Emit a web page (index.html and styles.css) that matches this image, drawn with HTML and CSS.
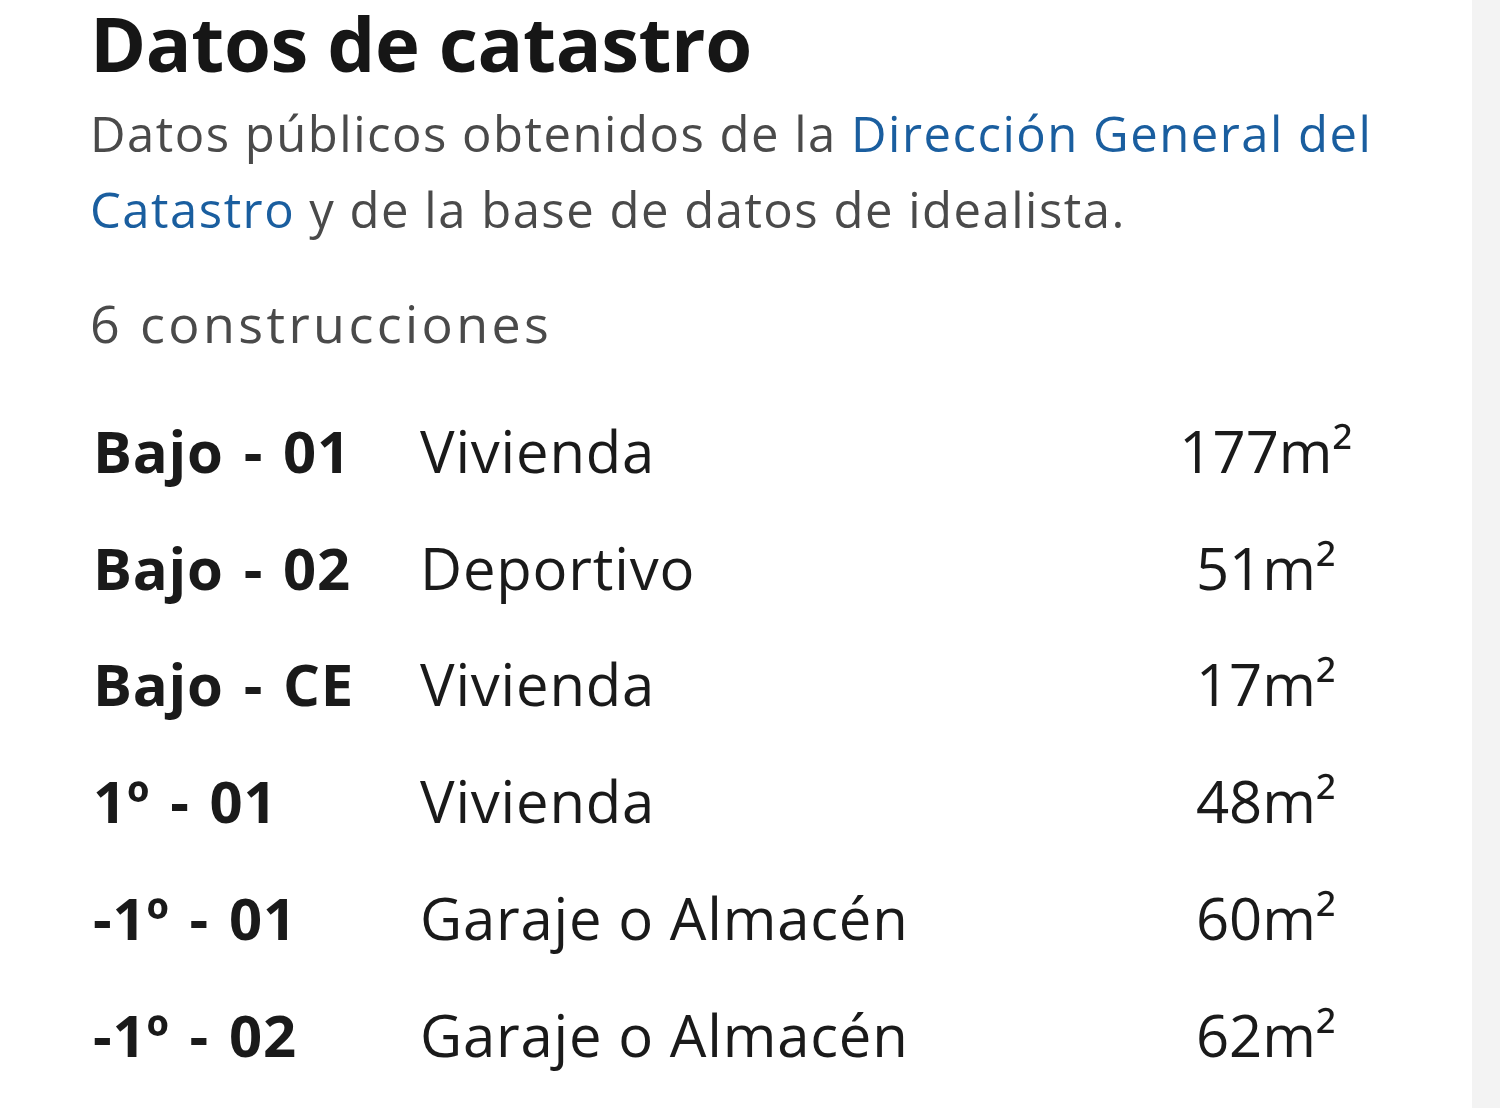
FILE: index.html
```html
<!DOCTYPE html>
<html lang="es">
<head>
<meta charset="utf-8">
<title>Datos de catastro</title>
<link rel="stylesheet" href="styles.css">
</head>
<body>
<div class="page">
  <main class="content">
    <h1 class="title">Datos de catastro</h1>
    <p class="intro">Datos públicos obtenidos de la <a class="link" href="#">Dirección General del Catastro</a> y de la base de datos de idealista.</p>
    <p class="count">6 construcciones</p>
    <div class="table">
      <div class="row"><span class="floor">Bajo - 01</span><span class="use">Vivienda</span><span class="area">177m²</span></div>
      <div class="row"><span class="floor">Bajo - 02</span><span class="use">Deportivo</span><span class="area">51m²</span></div>
      <div class="row"><span class="floor">Bajo - CE</span><span class="use">Vivienda</span><span class="area">17m²</span></div>
      <div class="row"><span class="floor">1º - 01</span><span class="use">Vivienda</span><span class="area">48m²</span></div>
      <div class="row"><span class="floor">-1º - 01</span><span class="use">Garaje o Almacén</span><span class="area">60m²</span></div>
      <div class="row"><span class="floor">-1º - 02</span><span class="use">Garaje o Almacén</span><span class="area">62m²</span></div>
    </div>
  </main>
  <aside class="side"></aside>
</div>
</body>
</html>
```

FILE: styles.css
```css
* { box-sizing: border-box; }
html, body { margin: 0; padding: 0; background: #ffffff; }
body { font-family: "Open Sans", "Noto Sans", sans-serif; color: #1a1a1a; }
.page { display: flex; width: 1500px; height: 1108px; overflow: hidden; }
.content { flex: 1; padding: 2px 0 0 90px; }
.side { width: 28px; background: #f3f3f3; }
.title { margin: 0; font-size: 76px; font-weight: 700; line-height: 82px; color: #161616; letter-spacing: -0.4px; }
.intro { margin: 11px 0 0; font-size: 49px; line-height: 76px; color: #4a4a4a; letter-spacing: 1.5px; width: 1340px; }
.link { color: #1a5e9f; text-decoration: none; }
.count { margin: 38px 0 0; font-size: 52px; line-height: 76px; color: #4a4a4a; letter-spacing: 3.4px; }
.table { margin-top: 31px; }
.row { display: grid; grid-template-columns: 330px 700px 292px; height: 116.8px; align-items: center; font-size: 58px; color: #1a1a1a; }
.floor { font-weight: 700; padding-left: 3px; letter-spacing: 0.8px; word-spacing: 4px; }
.use { letter-spacing: 0.8px; }
.area { text-align: center; }
```
